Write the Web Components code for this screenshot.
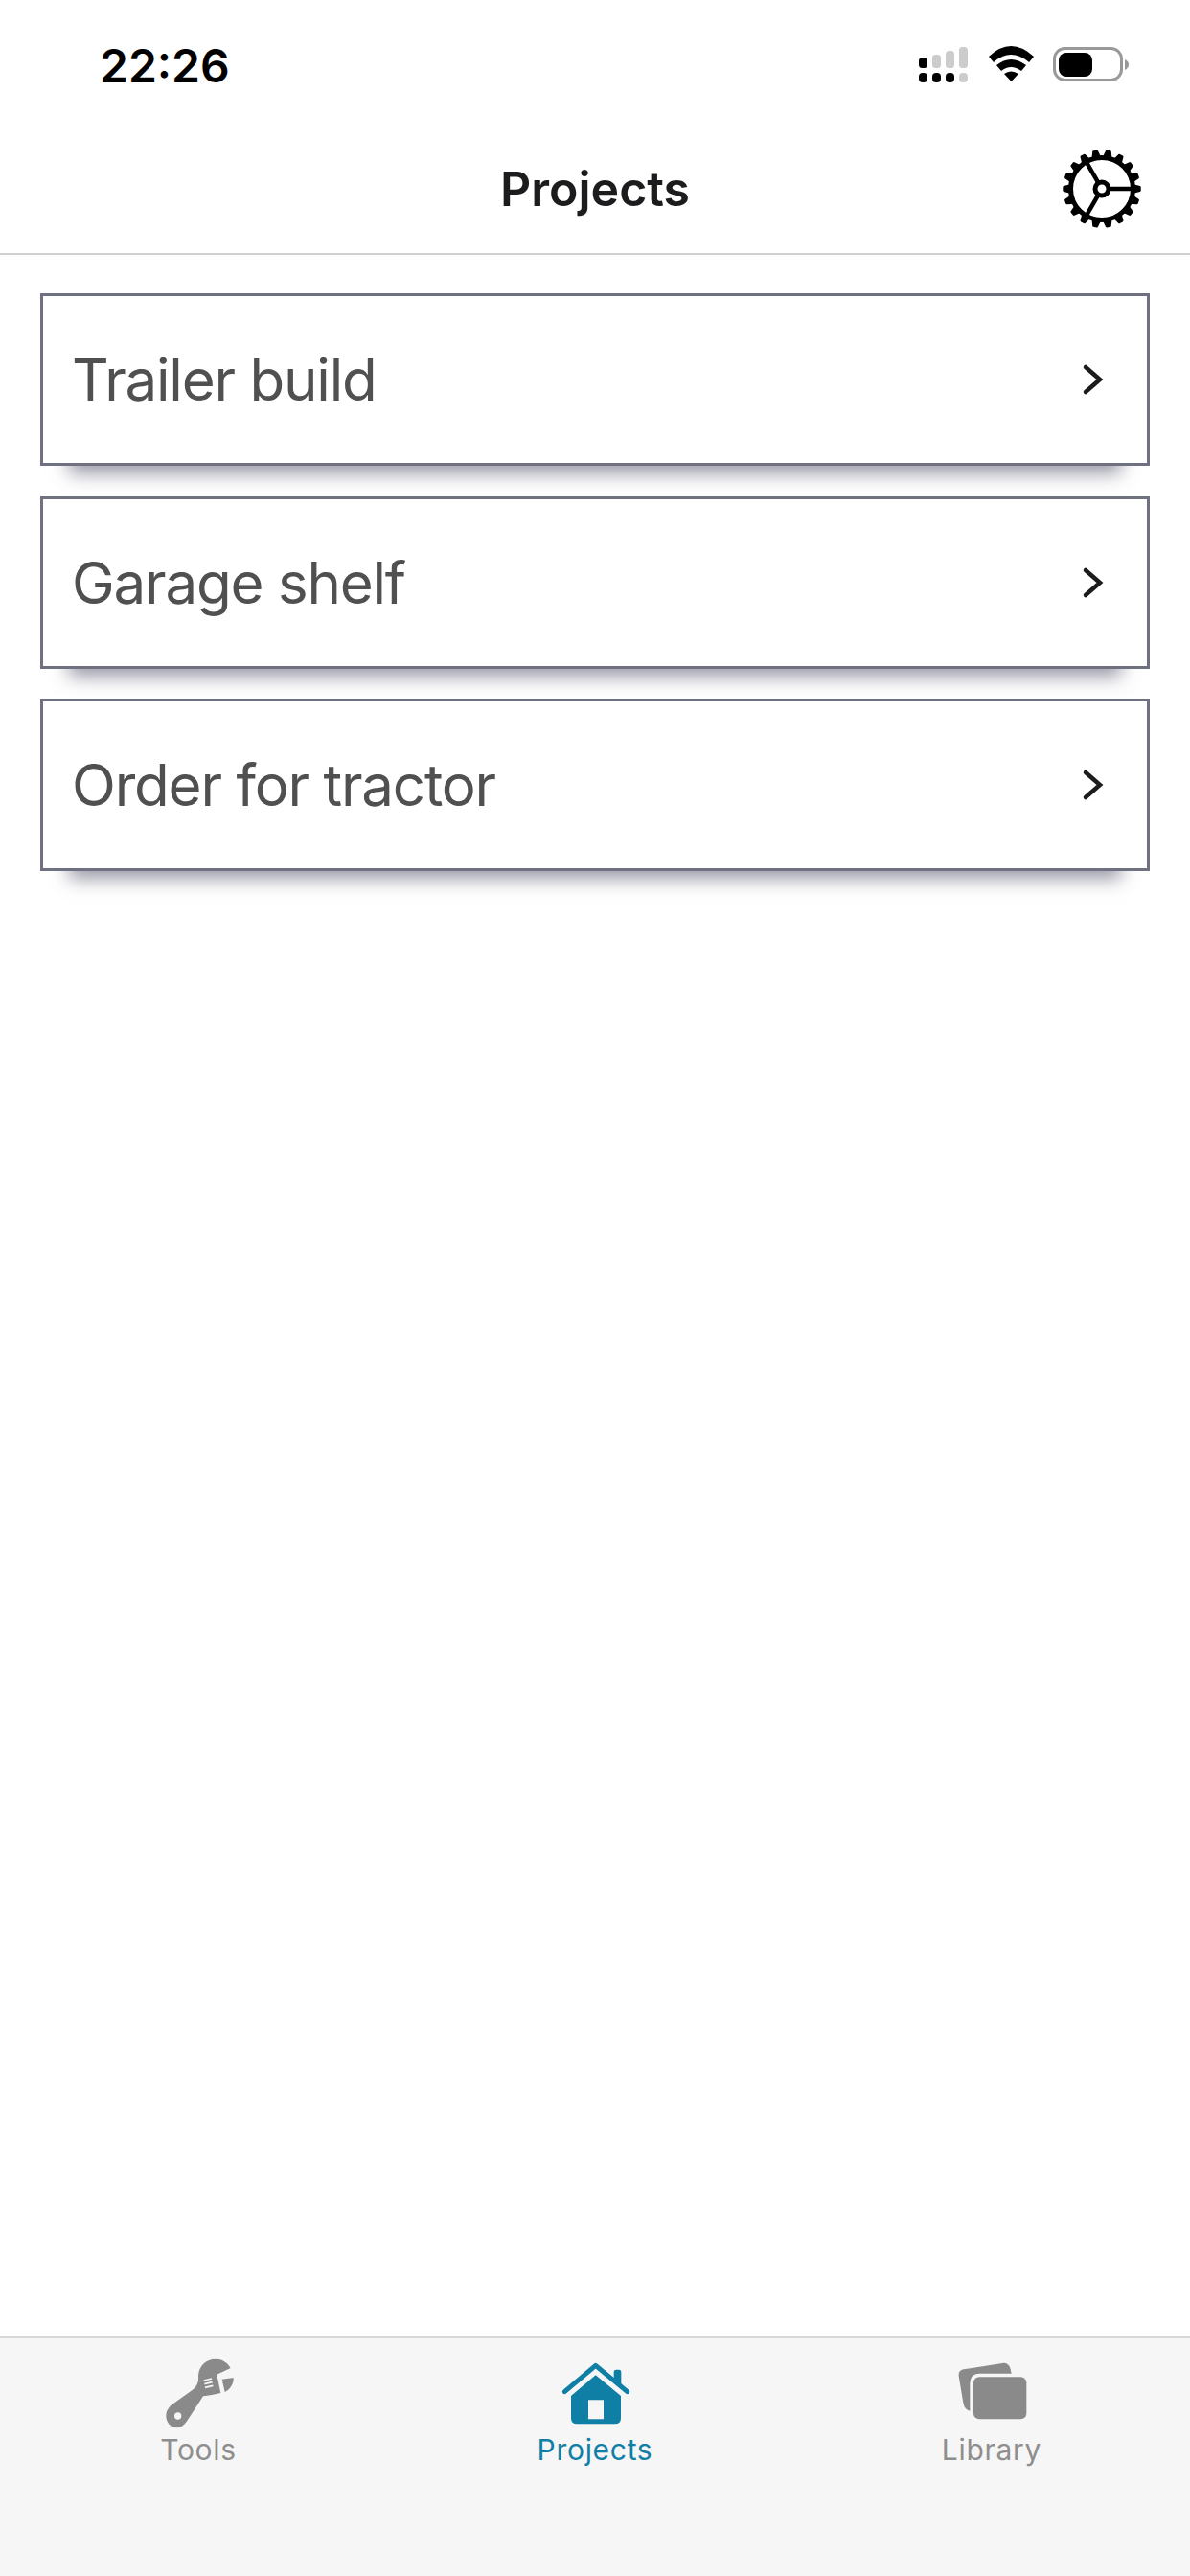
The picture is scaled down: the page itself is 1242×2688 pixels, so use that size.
<!DOCTYPE html>
<html>
<head>
<meta charset="utf-8">
<title>Projects</title>
<style>
  html, body { margin: 0; padding: 0; background: #fff; }
  body { font-family: Inter, "Liberation Sans", sans-serif; }
</style>
</head>
<body>

<app-shell>
  <status-bar slot="top" time="22:26"></status-bar>
  <nav-bar slot="top" title="Projects"></nav-bar>

  <project-card>Trailer build</project-card>
  <project-card>Garage shelf</project-card>
  <project-card>Order for tractor</project-card>

  <tab-bar slot="bottom">
    <tab-item label="Tools">
      <svg slot="icon" width="80" height="80" viewBox="81 120 240 240">
        <path fill="#8a8a8a" d="M100 302C100 286 110 273 122 265L183 221C197 210 203 196 201 176C203 146 225 125 255 125C275 125 292 135 302 153L259 173L271 231C253 235 233 239 216 241L166 318C156 333 145 340 134 340C113 339 100 322 100 302Z"/>
        <path fill="#8a8a8a" d="M275 188L311 183C312 202 301 220 284 228Z"/>
        <circle cx="137" cy="303" r="11" fill="#f6f6f6"/>
        <path stroke="#f6f6f6" stroke-width="5" fill="none" d="M218 192L243 186M220 203L245 197M222 214L247 208"/>
      </svg>
    </tab-item>
    <tab-item label="Projects" active>
      <svg slot="icon" width="80" height="80" viewBox="183 120 240 240">
        <path fill="#0f7fa6" d="M305 175L384 240V310Q384 328 366 328H246Q228 328 228 310V240ZM282 253V313H330V253Z" fill-rule="evenodd"/>
        <path fill="none" stroke="#0f7fa6" stroke-width="15" stroke-linecap="round" stroke-linejoin="round" d="M208 227L305 145L404 227"/>
        <path fill="#0f7fa6" d="M362 165Q362 158 369 158H378Q385 158 385 165V206L362 187Z"/>
      </svg>
    </tab-item>
    <tab-item label="Library">
      <svg slot="icon" width="80" height="80" viewBox="135 120 240 240">
        <path fill="#8a8a8a" d="M167 157L293 137Q312 135 317 170H215Q188 172 187 200V287Q170 284 166 262L152 178Q150 160 167 157Z"/>
        <rect x="198" y="181" width="166" height="132" rx="18" fill="#8a8a8a"/>
      </svg>
    </tab-item>
  </tab-bar>
</app-shell>

<script>
class AppShell extends HTMLElement {
  constructor() {
    super();
    this.attachShadow({ mode: "open" }).innerHTML = `
      <style>
        :host { display: flex; flex-direction: column; height: 2688px; background: #fff; }
        main { flex: 1; display: flex; flex-direction: column; gap: 31.5px; padding: 40px 42px 0; }
      </style>
      <slot name="top"></slot>
      <main><slot></slot></main>
      <slot name="bottom"></slot>
    `;
  }
}

class StatusBar extends HTMLElement {
  constructor() {
    super();
    this.attachShadow({ mode: "open" }).innerHTML = `
      <style>
        :host { display: flex; align-items: center; justify-content: space-between; height: 134px; padding: 0 64px 0 104px; box-sizing: border-box; }
        .time { font: 600 48px/1 Inter, "Liberation Sans", sans-serif; color: #000; padding-top: 3px; }
        svg { display: block; }
      </style>
      <span class="time"></span>
      <svg width="220" height="40" viewBox="958 47 220 40">
        <rect x="959" y="60" width="9" height="11" rx="3.5" fill="#000"/>
        <rect x="973" y="57" width="9" height="14" rx="3.5" fill="#ccc"/>
        <rect x="987" y="53" width="9" height="18" rx="3.5" fill="#ccc"/>
        <rect x="1001" y="49" width="9" height="22" rx="3.5" fill="#ccc"/>
        <rect x="959" y="76" width="9" height="10" rx="4" fill="#000"/>
        <rect x="973" y="76" width="9" height="10" rx="4" fill="#000"/>
        <rect x="987" y="76" width="9" height="10" rx="4" fill="#000"/>
        <rect x="1001" y="76" width="9" height="10" rx="4" fill="#ccc"/>
        <path d="M1032 59Q1055 37 1079 59L1074 65Q1055 49 1037 65Z" fill="#000"/>
        <path d="M1040 68Q1055 56 1071 68L1066 74Q1055 66 1045 74Z" fill="#000"/>
        <path d="M1048 77Q1055 72 1063 77L1055.500 85Z" fill="#000"/>
        <rect x="1100.500" y="50.500" width="70" height="33" rx="11" fill="none" stroke="#999" stroke-width="3"/>
        <rect x="1105" y="55" width="35" height="25" rx="8" fill="#000"/>
        <path d="M1174 62Q1178 64 1178 67Q1178 71 1174 73Z" fill="#999"/>
      </svg>
    `;
    this.shadowRoot.querySelector(".time").textContent = this.getAttribute("time");
  }
}

class NavBar extends HTMLElement {
  constructor() {
    super();
    this.attachShadow({ mode: "open" }).innerHTML = `
      <style>
        :host { display: grid; grid-template-columns: 1fr auto 1fr; align-items: center; height: 132px; padding-bottom: 4px; box-sizing: border-box; border-bottom: 2px solid #d0d0d0; }
        .title { grid-column: 2; font: 600 50px/1 Inter, "Liberation Sans", sans-serif; color: #1c1c1e; }
        .gear { grid-column: 3; justify-self: end; display: block; margin-right: 44px; }
      </style>
      <span class="title"></span>
      <svg class="gear" width="96" height="96" viewBox="-48 -48 96 96"></svg>
    `;
    this.shadowRoot.querySelector(".title").textContent = this.getAttribute("title");
    this.shadowRoot.querySelector(".gear").innerHTML = this.gearMarkup();
  }

  // 18 teeth, one of them sits at 0 degrees
  gearMarkup() {
    const pt = (r, deg) => {
      const a = deg * Math.PI / 180;
      return (r * Math.cos(a)).toFixed(2) + " " + (r * Math.sin(a)).toFixed(2);
    };
    let teeth = "";
    for (let i = 0; i < 18; i++) {
      const d = i * 20;
      teeth += `M${pt(32, d - 7)}L${pt(39.5, d - 2.5)}L${pt(39.5, d + 2.5)}L${pt(32, d + 7)}Z`;
    }
    const spokes = [0, 120, 240].map((d) => `M${pt(8, d)}L${pt(32, d)}`).join("");
    return `
      <path d="${teeth}" fill="#000" stroke="#000" stroke-width="2.500" stroke-linejoin="round"/>
      <circle r="32.500" fill="none" stroke="#000" stroke-width="5"/>
      <path d="${spokes}" fill="none" stroke="#000" stroke-width="4.500"/>
      <circle r="7" fill="#fff" stroke="#000" stroke-width="5"/>
    `;
  }
}

class ProjectCard extends HTMLElement {
  constructor() {
    super();
    this.attachShadow({ mode: "open" }).innerHTML = `
      <style>
        :host { display: flex; align-items: center; justify-content: space-between; height: 180px; box-sizing: border-box; padding: 0 44px 0 30px; background: #fff; border: 3px solid #6f7180; box-shadow: 0 38px 18px -30px rgba(70, 70, 95, .55); font: 400 60px/1 Inter, "Liberation Sans", sans-serif; letter-spacing: -1.2px; color: #505050; }
        svg { display: block; }
      </style>
      <span><slot></slot></span>
      <svg width="24" height="36" viewBox="0 0 24 36">
        <path d="M4 5L19 18L4 31" fill="none" stroke="#1c1c1e" stroke-width="4.500" stroke-linecap="round" stroke-linejoin="miter"/>
      </svg>
    `;
  }
}

class TabBar extends HTMLElement {
  constructor() {
    super();
    this.attachShadow({ mode: "open" }).innerHTML = `
      <style>
        :host { display: grid; grid-template-columns: repeat(3, 1fr); height: 250px; box-sizing: border-box; padding-top: 20px; background: #f6f6f6; border-top: 2px solid #d8d8d8; }
      </style>
      <slot></slot>
    `;
  }
}

class TabItem extends HTMLElement {
  constructor() {
    super();
    this.attachShadow({ mode: "open" }).innerHTML = `
      <style>
        :host { display: flex; flex-direction: column; align-items: center; font: 400 30px/36px Inter, "Liberation Sans", sans-serif; letter-spacing: .7px; color: #8e8e8e; }
        :host([active]) { color: #0f7fa6; }
        .icon { height: 78px; }
      </style>
      <div class="icon"><slot name="icon"></slot></div>
      <span class="label"></span>
    `;
    this.shadowRoot.querySelector(".label").textContent = this.getAttribute("label");
  }
}

customElements.define("app-shell", AppShell);
customElements.define("status-bar", StatusBar);
customElements.define("nav-bar", NavBar);
customElements.define("project-card", ProjectCard);
customElements.define("tab-bar", TabBar);
customElements.define("tab-item", TabItem);
</script>
</body>
</html>
